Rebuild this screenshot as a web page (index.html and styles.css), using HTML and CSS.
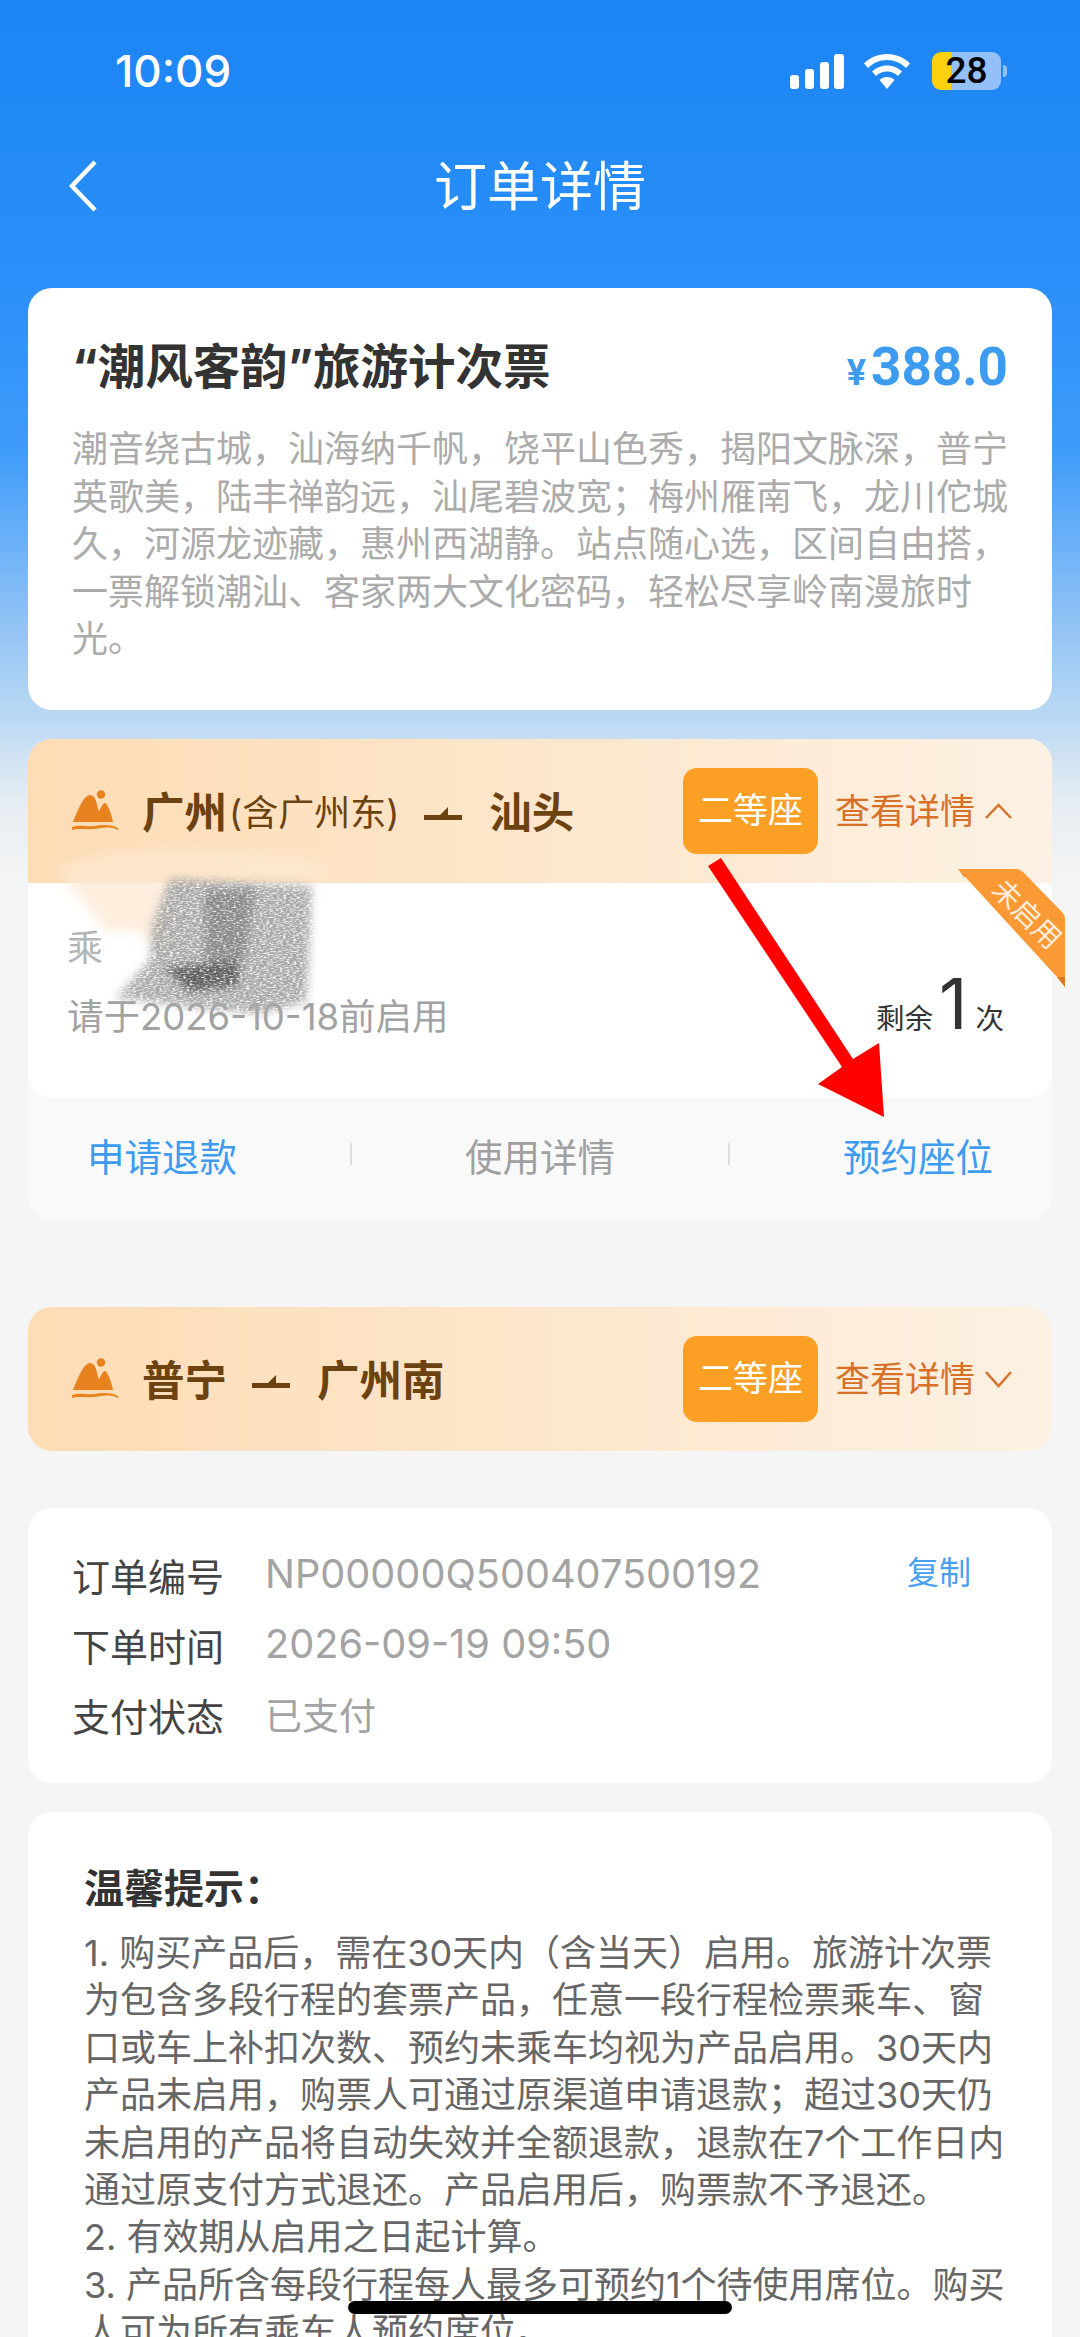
FILE: index.html
```html
<!DOCTYPE html>
<html lang="zh-CN">
<head>
    <meta charset="UTF-8">
    <meta name="viewport" content="width=device-width, initial-scale=1.0">
    <title>订单详情</title>
    <link rel="stylesheet" href="styles.css">
</head>
<body>

<div class="status-bar">
    <span class="status-time">10:09</span>
    <div class="status-icons">
        <svg class="signal" width="54" height="35" viewBox="0 0 54 35" fill="#fff">
            <rect x="0" y="21" width="9" height="14" rx="3"/>
            <rect x="15" y="15" width="9" height="20" rx="3"/>
            <rect x="30" y="8" width="9" height="27" rx="3"/>
            <rect x="44" y="0" width="10" height="35" rx="3"/>
        </svg>
        <svg class="wifi" width="46" height="35" viewBox="0 0 46 35" fill="#fff">
            <path d="M23 0C14 0 6 3.500 0 9.500L4 14C9 9 15.500 6 23 6S37 9 42 14L46 9.500C40 3.500 32 0 23 0Z"/>
            <path d="M23 11.500C17 11.500 12 14 8 17.500L12 22C15 19 18.500 17.500 23 17.500S31 19 34 22L38 17.500C34 14 29 11.500 23 11.500Z"/>
            <path d="M23 23C20 23 17.500 24 15.500 26L23 35L30.500 26C28.500 24 26 23 23 23Z"/>
        </svg>
        <div class="battery"><span class="battery-num">28</span></div>
        <div class="battery-nub"></div>
    </div>
</div>

<div class="nav-bar">
    <svg class="nav-back" width="30" height="52" viewBox="0 0 30 52" fill="none" stroke="#fff" stroke-width="4.500">
        <path d="M27 2L4 26L27 50"/>
    </svg>
    <h1 class="nav-title">订单详情</h1>
</div>

<div class="page">
    <div class="card product">
        <div class="product-head">
            <h2 class="product-name">“潮风客韵”旅游计次票</h2>
            <div class="product-price"><span class="yen">¥</span>388.0</div>
        </div>
        <p class="product-desc">潮音绕古城，汕海纳千帆，饶平山色秀，揭阳文脉深，普宁<br>英歌美，陆丰禅韵远，汕尾碧波宽；梅州雁南飞，龙川佗城<br>久，河源龙迹藏，惠州西湖静。站点随心选，区间自由搭，<br>一票解锁潮汕、客家两大文化密码，轻松尽享岭南漫旅时<br>光。</p>
    </div>

    <div class="ticket">
        <div class="route">
            <svg class="route-icon" width="46" height="42" viewBox="0 0 46 42">
                <circle cx="29" cy="4.500" r="4.200" fill="#e8821e"/>
                <path d="M1 32C4 24 10 10 14 7Q18 3 22 7C25 11 25 17 27 21C29 17 31 13 33 13C36 14 40 26 41 32Z" fill="#e8821e"/>
                <path d="M0 37C8 34 14 37 22 36C30 35 38 34 46 38L46 40C38 36 30 38 22 39C14 40 8 38 0 40Z" fill="#e8821e"/>
            </svg>
            <div class="route-text">
                <b>广州</b><span class="route-note">(含广州东)</span>
                <svg class="route-arrow" width="38" height="14" viewBox="0 0 38 14" fill="#6b4210"><path d="M0 8H16L24 0V8H38V13H0Z"/></svg>
                <b>汕头</b>
            </div>
            <span class="seat">二等座</span>
            <span class="route-more">查看详情</span>
            <svg class="chevron" width="27" height="16" viewBox="0 0 27 16" fill="none" stroke="#d9702a" stroke-width="2.500"><path d="M1 15L13.500 2L26 15"/></svg>
        </div>
        <div class="ticket-body">
            <div class="ticket-info">
                <span class="passenger">乘</span>
                <span class="ticket-date">请于2026-10-18前启用</span>
            </div>
            <div class="ticket-left">剩余<span class="left-num">1</span>次</div>
        </div>
        <div class="ticket-actions">
            <a class="action blue">申请退款</a>
            <i class="action-line"></i>
            <a class="action">使用详情</a>
            <i class="action-line"></i>
            <a class="action blue">预约座位</a>
        </div>
        <div class="ribbon">
            <svg width="107" height="118" viewBox="0 0 107 118">
                <path d="M0 0L8 8H6Z" fill="#d97a1c"/>
                <path d="M0 0H58Q62 0 66 4L103 42Q107 46 107 50V118L99 108Z" fill="#fb9a34"/>
                <path d="M99 108L107 118V108Z" fill="#d97a1c"/>
            </svg>
            <span class="ribbon-text">未启用</span>
        </div>
    </div>

    <div class="route route-closed">
        <svg class="route-icon" width="46" height="42" viewBox="0 0 46 42">
            <circle cx="29" cy="4.500" r="4.200" fill="#e8821e"/>
            <path d="M1 32C4 24 10 10 14 7Q18 3 22 7C25 11 25 17 27 21C29 17 31 13 33 13C36 14 40 26 41 32Z" fill="#e8821e"/>
            <path d="M0 37C8 34 14 37 22 36C30 35 38 34 46 38L46 40C38 36 30 38 22 39C14 40 8 38 0 40Z" fill="#e8821e"/>
        </svg>
        <div class="route-text">
            <b>普宁</b>
            <svg class="route-arrow" width="38" height="14" viewBox="0 0 38 14" fill="#6b4210"><path d="M0 8H16L24 0V8H38V13H0Z"/></svg>
            <b>广州南</b>
        </div>
        <span class="seat">二等座</span>
        <span class="route-more">查看详情</span>
        <svg class="chevron" width="27" height="18" viewBox="0 0 27 18" fill="none" stroke="#d9702a" stroke-width="2.500"><path d="M1 2L13.500 16L26 2"/></svg>
    </div>

    <div class="card order">
        <div class="order-row"><span class="order-label">订单编号</span><span class="order-value">NP00000Q500407500192</span><a class="order-copy">复制</a></div>
        <div class="order-row"><span class="order-label">下单时间</span><span class="order-value">2026-09-19 09:50</span></div>
        <div class="order-row"><span class="order-label">支付状态</span><span class="order-value order-state">已支付</span></div>
    </div>

    <div class="card tips">
        <h3 class="tips-title">温馨提示：</h3>
        <p class="tips-text">1. 购买产品后，需在30天内（含当天）启用。旅游计次票<br>为包含多段行程的套票产品，任意一段行程检票乘车、窗<br>口或车上补扣次数、预约未乘车均视为产品启用。30天内<br>产品未启用，购票人可通过原渠道申请退款；超过30天仍<br>未启用的产品将自动失效并全额退款，退款在7个工作日内<br>通过原支付方式退还。产品启用后，购票款不予退还。<br>2. 有效期从启用之日起计算。<br>3. 产品所含每段行程每人最多可预约1个待使用席位。购买<br>人可为所有乘车人预约席位。</p>
    </div>
</div>

<!-- marks drawn on top of the screenshot, in page coordinates -->
<svg class="marks" width="1080" height="2337" viewBox="0 0 1080 2337">
    <defs>
        <filter id="soft" x="-20%" y="-20%" width="140%" height="140%"><feGaussianBlur stdDeviation="6"/></filter>
        <filter id="pencil" x="-10%" y="-10%" width="120%" height="120%">
            <feGaussianBlur in="SourceGraphic" stdDeviation="4" result="base"/>
            <feTurbulence type="fractalNoise" baseFrequency="0.3 0.7" numOctaves="2" seed="4"/>
            <feColorMatrix values="0 0 0 0 0  0 0 0 0 0  0 0 0 0 0  0 0 0 2.600 -0.500" result="grain"/>
            <feComposite in="base" in2="grain" operator="in"/>
        </filter>
    </defs>
    <path d="M55 870C90 848 180 845 250 852C290 850 330 866 340 876C300 884 200 882 172 888L168 945L110 935L70 886Z" fill="#fde9d3" opacity="0.75" filter="url(#soft)"/>
    <ellipse cx="125" cy="940" rx="22" ry="9" fill="#fff" opacity="0.9" filter="url(#soft)"/>
    <path d="M170 878L312 886L308 985L306 1002L260 1014L200 1008L116 998L150 960L152 925Z" fill="#a8a8a8" filter="url(#pencil)"/>
    <path d="M205 890L255 890L245 960L205 965Z" fill="#828282" opacity="0.8" filter="url(#pencil)"/>
    <path d="M165 968L240 960L238 985L190 992Z" fill="#555" opacity="0.9" filter="url(#pencil)"/>
    <path d="M708 866L721 858L853 1059L879 1043L884 1117L818 1084L842 1067Z" fill="#fe0000"/>
</svg>

<div class="home-bar"></div>

</body>
</html>
```

FILE: styles.css
```css
html, body {
    margin: 0;
    padding: 0;
}

body {
    position: relative;
    width: 1080px;
    height: 2337px;
    overflow: hidden;
    font-family: "Inter", "Noto Sans CJK SC", sans-serif;
    color: #333;
    background: linear-gradient(to bottom, #1b85f4 0, #2a8ff9 280px, #3f9bf9 450px, #8bc0f6 610px, #bcd9f3 720px, #e6edf3 800px, #f5f5f5 890px);
}

h1, h2, h3, p {
    margin: 0;
}

/* status bar */
.status-bar {
    display: flex;
    justify-content: space-between;
    align-items: center;
    height: 38px;
    padding: 52px 73px 38px 115px;
    color: #fff;
}

.status-time {
    font-size: 44px;
    font-weight: 500;
    line-height: 38px;
}

.status-icons {
    display: flex;
    align-items: center;
}

.wifi {
    margin-left: 20px;
}

.battery {
    width: 69px;
    height: 38px;
    margin-left: 22px;
    border-radius: 9px;
    background: linear-gradient(to right, #fdd00e 19px, #93c0f8 19px);
    display: flex;
    justify-content: center;
    align-items: center;
}

.battery-num {
    font-family: "Roboto", sans-serif;
    font-size: 37px;
    font-weight: 500;
    line-height: 38px;
    color: #000;
}

.battery-nub {
    width: 4px;
    height: 12px;
    margin-left: 2px;
    border-radius: 0 6px 6px 0;
    background-color: #93c0f8;
}

/* nav */
.nav-bar {
    position: relative;
    display: flex;
    justify-content: center;
    align-items: center;
    height: 116px;
}

.nav-back {
    position: absolute;
    left: 68px;
    top: 32px;
}

.nav-title {
    margin-top: -6px;
    font-size: 53px;
    font-weight: 400;
    color: #fff;
}

.page {
    padding: 44px 28px 0;
}

.card {
    background: #fff;
    border-radius: 24px;
}

/* product card */
.product {
    height: 422px;
    padding: 54px 44px 0;
    box-sizing: border-box;
}

.product-head {
    display: flex;
    justify-content: space-between;
    align-items: center;
    height: 50px;
}

.product-name {
    font-size: 47.500px;
    font-weight: 700;
    line-height: 50px;
    color: #333;
}

.product-price {
    font-family: "Roboto", sans-serif;
    font-size: 53px;
    font-weight: 700;
    color: #3d9bf0;
}

.yen {
    font-size: 36px;
    margin-right: 5px;
}

.product-desc {
    margin-top: 34px;
    font-size: 36px;
    line-height: 47.5px;
    color: #ababab;
    white-space: nowrap;
}

/* ticket */
.ticket {
    position: relative;
    margin-top: 29px;
    height: 481px;
    border-radius: 24px;
    background-color: #f9f9f9;
}

.route {
    display: flex;
    align-items: center;
    height: 144px;
    padding: 0 40px 0 44px;
    box-sizing: border-box;
    border-radius: 24px 24px 0 0;
    background: linear-gradient(to right, #fddcb5, #fdf1e3);
}

.route-closed {
    margin-top: 87px;
    border-radius: 24px;
}

.route-icon {
    flex: none;
}

.route-text {
    display: flex;
    align-items: center;
    flex: 1;
    margin: -3px 0 0 24px;
    color: #6b4210;
    font-size: 42.500px;
    white-space: nowrap;
}

.route-text b {
    font-weight: 700;
}

.route-note {
    margin-left: 2px;
    font-size: 36px;
}

.route-arrow {
    margin: 8px 27px 0 25px;
}

.seat {
    width: 135px;
    height: 86px;
    border-radius: 14px;
    background-color: #fba024;
    color: #fff;
    font-size: 35px;
    line-height: 84px;
    text-align: center;
}

.route-more {
    margin: -5px 10px 0 17px;
    font-size: 35px;
    color: #d9702a;
}

.ticket-body {
    display: flex;
    justify-content: space-between;
    height: 215px;
    padding: 0 48px 0 39px;
    box-sizing: border-box;
    border-radius: 8px 8px 24px 24px;
    background: #fff;
}

.ticket-info {
    display: flex;
    flex-direction: column;
    padding-top: 43px;
}

.passenger {
    font-size: 36px;
    line-height: 44px;
    color: #b4b4b4;
}

.ticket-date {
    margin-top: 25px;
    font-size: 36.500px;
    line-height: 44px;
    color: #a2a2a2;
}

.ticket-left {
    display: flex;
    align-items: flex-end;
    padding-top: 78px;
    height: 78px;
    font-size: 28.500px;
    line-height: 40px;
    color: #333;
}

.left-num {
    margin: 0 8px 0 6px;
    font-size: 70px;
    font-weight: 400;
    line-height: 70px;
}

.ticket-actions {
    display: flex;
    justify-content: space-between;
    align-items: center;
    height: 112px;
    padding: 0 59px;
}

.action {
    font-size: 37.500px;
    color: #a0a0a0;
}

.action.blue {
    color: #3d9bf0;
}

.action-line {
    width: 2px;
    height: 22px;
    background-color: #dcdcdc;
}

/* the corner ribbon on the ticket */
.ribbon {
    position: absolute;
    right: -13px;
    top: 130px;
    width: 107px;
    height: 118px;
}

.ribbon svg {
    display: block;
}

.ribbon-text {
    position: absolute;
    left: 27px;
    top: 25px;
    font-size: 28px;
    line-height: 40px;
    color: #ffeedd;
    white-space: nowrap;
    transform: rotate(45deg);
}

/* order info */
.order {
    height: 275px;
    margin-top: 57px;
    padding: 31px 44px 0;
    box-sizing: border-box;
}

.order-row {
    display: flex;
    align-items: center;
    height: 70px;
}

.order-label {
    width: 193px;
    font-size: 38px;
    color: #444;
}

.order-value {
    flex: 1;
    font-size: 39.700px;
    color: #a3a3a3;
}

.order-state {
    font-size: 37px;
}

.order-copy {
    margin: -8px 37px 0 0;
    font-size: 32px;
    color: #4a9ff0;
}

/* tips */
.tips {
    margin-top: 29px;
    height: 600px;
    padding: 54px 56px 0;
    box-sizing: border-box;
    border-radius: 24px;
}

.tips-title {
    font-size: 40px;
    font-weight: 700;
    line-height: 46px;
    color: #333;
}

.tips-text {
    margin-top: 18px;
    font-size: 36px;
    line-height: 47.400px;
    color: #666;
    white-space: nowrap;
}

/* overlays */
.marks {
    position: absolute;
    left: 0;
    top: 0;
}

.home-bar {
    position: absolute;
    left: 348px;
    bottom: 23px;
    width: 384px;
    height: 13px;
    border-radius: 7px;
    background-color: #000;
}
```
